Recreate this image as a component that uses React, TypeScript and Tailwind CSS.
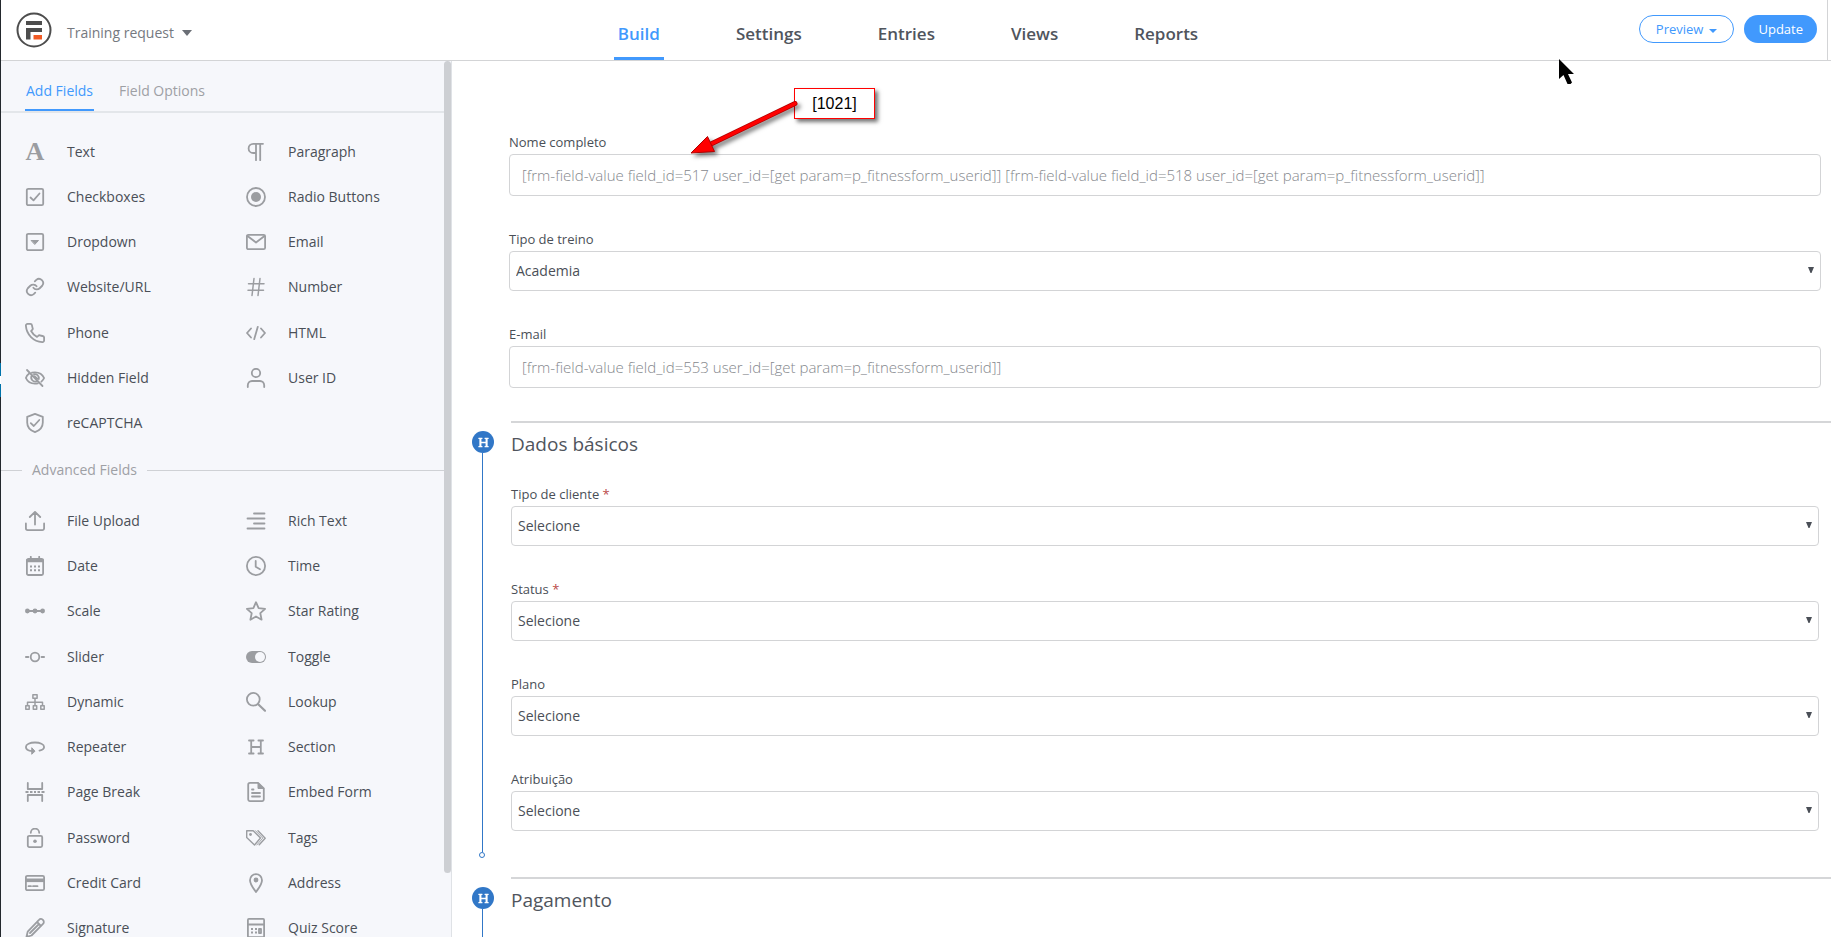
import { useState } from 'react';
import type { ReactNode } from 'react';
import { FaHeading } from 'react-icons/fa';

interface Campo {
  nombre: string;
  icono: ReactNode;
}

const Svg = ({ children }: { children: ReactNode }) => (
  <svg
    viewBox="0 0 20 20"
    fill="none"
    stroke="currentColor"
    strokeWidth={1.8}
    strokeLinecap="round"
    strokeLinejoin="round"
    aria-hidden="true"
    className="w-5 h-5 shrink-0 text-[#9b9da1]">
    {children}
  </svg>
);

const camposBasicos: Campo[] = [
  {
    nombre: 'Text',
    icono: (
      <span
        aria-hidden="true"
        className="w-5 shrink-0 text-center font-['Liberation_Serif',serif] text-[26px] leading-5 font-bold text-[#9b9da1]">
        A
      </span>
    ),
  },
  {
    nombre: 'Paragraph',
    icono: (
      <Svg>
        <path d="M17 1.8H7.2a4.6 4.6 0 0 0 0 9.2H10V1.8M10 11v7.2M14.2 1.8v16.4" />
      </Svg>
    ),
  },
  {
    nombre: 'Checkboxes',
    icono: (
      <Svg>
        <rect x="1.8" y="1.8" width="16.4" height="16.4" rx="1.5" />
        <path d="M5.5 10.5l3 2.8 6-6.8" />
      </Svg>
    ),
  },
  {
    nombre: 'Radio Buttons',
    icono: (
      <Svg>
        <circle cx="10" cy="10" r="9" />
        <circle cx="10" cy="10" r="5" fill="currentColor" stroke="none" />
      </Svg>
    ),
  },
  {
    nombre: 'Dropdown',
    icono: (
      <Svg>
        <rect x="1.8" y="1.8" width="16.4" height="16.4" rx="1.5" />
        <path d="M6.5 8.5h7L10 12.2z" fill="currentColor" strokeWidth={1} />
      </Svg>
    ),
  },
  {
    nombre: 'Email',
    icono: (
      <Svg>
        <rect x="0.9" y="2.8" width="18.2" height="14.4" rx="1.5" />
        <path d="M1.5 4l8.5 6.5L18.5 4" />
      </Svg>
    ),
  },
  {
    nombre: 'Website/URL',
    icono: (
      <Svg>
        <path d="M8.4 10.8a4.2 4.2 0 0 0 6.3.45l2.5-2.5a4.2 4.2 0 0 0-5.9-5.9L9.8 4.3" />
        <path d="M11.6 9.2a4.2 4.2 0 0 0-6.3-.45l-2.5 2.5a4.2 4.2 0 0 0 5.9 5.9l1.5-1.45" />
      </Svg>
    ),
  },
  {
    nombre: 'Number',
    icono: (
      <Svg>
        <path d="M2.5 6.7H18M2 13.3h15.5M8 1.5L6 18.5M14 1.5l-2 17" strokeWidth={1.5} />
      </Svg>
    ),
  },
  {
    nombre: 'Phone',
    icono: (
      <Svg>
        <path d="M19.1 14.8v2.6a1.7 1.7 0 0 1-1.9 1.7 17.5 17.5 0 0 1-16.3-16.2A1.7 1.7 0 0 1 2.6.9h2.7a1.7 1.7 0 0 1 1.7 1.5c.1.9.3 1.7.6 2.5a1.7 1.7 0 0 1-.4 1.9L6.1 8a14 14 0 0 0 5.9 5.9l1.2-1.1a1.7 1.7 0 0 1 1.8-.4c.8.3 1.7.5 2.6.6a1.7 1.7 0 0 1 1.5 1.8z" />
      </Svg>
    ),
  },
  {
    nombre: 'HTML',
    icono: (
      <Svg>
        <path d="M5 5.5L1 10l4 4.5M15 5.5l4 4.5-4 4.5M11.8 3.8L8.2 16.2" />
      </Svg>
    ),
  },
  {
    nombre: 'Hidden Field',
    icono: (
      <Svg>
        <path d="M4.2 5.5C2.5 6.7 1.4 8.3.9 10c1.5 3.4 4.8 5.7 9 5.7 1 0 2-.1 2.9-.4M7 4.7c1-.3 2-.4 3-.4 4.3 0 7.6 2.3 9.1 5.7-.6 1.4-1.5 2.6-2.7 3.6" />
        <path d="M6.7 7.7a4 4 0 0 0 5 5.6M9 6.2a4 4 0 0 1 4.8 4.8M9.5 8.2l2.8 2.5M2 2l15.5 16" />
      </Svg>
    ),
  },
  {
    nombre: 'User ID',
    icono: (
      <Svg>
        <circle cx="10" cy="5" r="4.2" />
        <path d="M1.8 19v-1.8A4.3 4.3 0 0 1 6 13h8a4.3 4.3 0 0 1 4.2 4.2V19" />
      </Svg>
    ),
  },
  {
    nombre: 'reCAPTCHA',
    icono: (
      <Svg>
        <path d="M10 .9l7.8 2.9v5.6c0 4.4-3.1 8-7.8 9.7-4.7-1.7-7.8-5.3-7.8-9.7V3.8z" />
        <path d="M5.8 10.2l3 2.8 5.5-6" />
      </Svg>
    ),
  },
];

const camposAvanzados: Campo[] = [
  {
    nombre: 'File Upload',
    icono: (
      <Svg>
        <path d="M.9 12.5v4.8a1.8 1.8 0 0 0 1.8 1.8h14.6a1.8 1.8 0 0 0 1.8-1.8v-4.8M10 13.5V1.2M4.8 6L10 .9 15.2 6" />
      </Svg>
    ),
  },
  {
    nombre: 'Rich Text',
    icono: (
      <Svg>
        <path d="M8 2.5h10.5M1.5 7.5h17M8 12.5h10.5M1.5 17.5h17" />
      </Svg>
    ),
  },
  {
    nombre: 'Date',
    icono: (
      <Svg>
        <rect x="1.9" y="3" width="16.2" height="16" rx="1.5" />
        <path d="M2 4h16M2 5.3h16M5.8.8v2M14.2.8v2" />
        <path d="M5 10.5h2M9 10.5h2M13 10.5h2M5 14.2h2M9 14.2h2M13 14.2h2" strokeLinecap="butt" strokeWidth={2} />
      </Svg>
    ),
  },
  {
    nombre: 'Time',
    icono: (
      <Svg>
        <circle cx="10" cy="10" r="9.1" />
        <path d="M9.7 5v5.7l4.3 2.5" />
      </Svg>
    ),
  },
  {
    nombre: 'Scale',
    icono: (
      <Svg>
        <path d="M2 10h16" />
        <g fill="currentColor" stroke="none">
          <circle cx="2.4" cy="10" r="2.4" />
          <circle cx="10" cy="10" r="2.4" />
          <circle cx="17.6" cy="10" r="2.4" />
        </g>
      </Svg>
    ),
  },
  {
    nombre: 'Star Rating',
    icono: (
      <Svg>
        <path d="M10 1.2l2.6 5.9 6.5.7-4.8 4.4 1.3 6.5L10 15.5l-5.6 3.2 1.3-6.5L.9 7.8l6.5-.7z" />
      </Svg>
    ),
  },
  {
    nombre: 'Slider',
    icono: (
      <Svg>
        <circle cx="10" cy="10" r="4.3" />
        <path d="M.9 10h2.5M16.6 10h2.5" />
      </Svg>
    ),
  },
  {
    nombre: 'Toggle',
    icono: (
      <Svg>
        <rect x="0" y="4" width="20" height="12" rx="6" fill="currentColor" stroke="none" />
        <circle cx="14" cy="10" r="5" fill="#f6f7fb" stroke="none" />
      </Svg>
    ),
  },
  {
    nombre: 'Dynamic',
    icono: (
      <Svg>
        <path d="M7.9 2.8h4.2v3.4H7.9zM.8 13.8h3.4v3.4H.8zM8.3 13.8h3.4v3.4H8.3zM15.8 13.8h3.4v3.4h-3.4zM10 6.2v7M2.5 13v-2.8h15V13" strokeWidth={1.5} />
      </Svg>
    ),
  },
  {
    nombre: 'Lookup',
    icono: (
      <Svg>
        <circle cx="7.3" cy="7.3" r="6.4" />
        <path d="M12.2 12.2l6.8 6.5" strokeWidth={2.2} />
      </Svg>
    ),
  },
  {
    nombre: 'Repeater',
    icono: (
      <Svg>
        <path d="M14.5 13.6c2.8-.7 4.6-2 4.6-3.7 0-2.6-4-4.4-9.1-4.4S.9 7.3.9 9.9c0 2.2 2.7 3.8 6.6 4.3" />
        <path d="M7 11l3 3.2L7 17z" fill="currentColor" strokeWidth={1} />
      </Svg>
    ),
  },
  {
    nombre: 'Section',
    icono: (
      <Svg>
        <path d="M5.2 3.5v13M14.8 3.5v13M5.2 10h9.6M3 3.5h4.6M12.4 3.5H17M3 16.5h4.6M12.4 16.5H17" />
      </Svg>
    ),
  },
  {
    nombre: 'Page Break',
    icono: (
      <Svg>
        <path d="M2.8.9V7h14.4V.9M2.8 19.1V13h14.4v6.1" />
        <path d="M.5 10h3M5 10h2.5M9 10h2M12.5 10H15M16.5 10h3" strokeLinecap="butt" />
      </Svg>
    ),
  },
  {
    nombre: 'Embed Form',
    icono: (
      <Svg>
        <path d="M12 .9H4A1.8 1.8 0 0 0 2.2 2.7v14.6A1.8 1.8 0 0 0 4 19.1h12a1.8 1.8 0 0 0 1.8-1.8V6.5z" />
        <path d="M12 1v5.5h5.5z" fill="currentColor" strokeWidth={1} />
        <path d="M6 7.5h1.5M6 11h8M6 14.5h8" />
      </Svg>
    ),
  },
  {
    nombre: 'Password',
    icono: (
      <Svg>
        <rect x="2.8" y="7.8" width="14.4" height="11.3" rx="1.5" />
        <path d="M5.8 4.8a4.2 4.2 0 0 1 8.4 0" />
        <circle cx="10" cy="13.3" r="1.8" fill="currentColor" stroke="none" />
      </Svg>
    ),
  },
  {
    nombre: 'Tags',
    icono: (
      <Svg>
        <path d="M.7 2.7h6.5l7.3 7.3-6 7L.7 9.5zM12 2.7l7.2 7.5-6 6.6" strokeWidth={1.4} />
        <path d="M9.5 2.7l7.3 7.4-6 6.9" strokeWidth={0.9} />
        <circle cx="4.5" cy="6.5" r="1.4" fill="currentColor" stroke="none" />
      </Svg>
    ),
  },
  {
    nombre: 'Credit Card',
    icono: (
      <Svg>
        <rect x=".9" y="2.8" width="18.2" height="14.4" rx="1.5" />
        <path d="M1 7.3h18" strokeWidth={3.6} strokeLinecap="butt" />
        <path d="M3.5 13.2H6M8 13.2h4.5" />
      </Svg>
    ),
  },
  {
    nombre: 'Address',
    icono: (
      <Svg>
        <path d="M10 19c-2-3-6-7.5-6-11.8a6 6 0 0 1 12 0C16 11.5 12 16 10 19z" />
        <circle cx="10" cy="7" r="2.4" fill="currentColor" stroke="none" />
      </Svg>
    ),
  },
  {
    nombre: 'Signature',
    icono: (
      <Svg>
        <path d="M14 1.8a2.6 2.6 0 0 1 4 .2 2.6 2.6 0 0 1 0 3.8L6.5 17.5l-5 1.3 1.2-5.2zM12 4l4 4M14 6L5 15" />
      </Svg>
    ),
  },
  {
    nombre: 'Quiz Score',
    icono: (
      <Svg>
        <rect x="1.9" y=".9" width="16.2" height="18.2" rx="1" />
        <path d="M2 6.5h16" />
        <path d="M5 11h2M9 11h2M5 14.5h2M9 14.5h2M13 11h2v4h-2z" strokeLinecap="butt" />
      </Svg>
    ),
  },
];

const ListaCampos = ({ campos, className }: { campos: Campo[]; className: string }) => (
  <ul className={`grid grid-cols-[221px_1fr] ${className}`}>
    {campos.map((campo) => (
      <li key={campo.nombre} className="flex">
        <button type="button" className="flex items-center gap-[22px] w-full pl-6 text-left text-[#4a4f57]">
          {campo.icono}
          {campo.nombre}
        </button>
      </li>
    ))}
  </ul>
);

interface CampoFormProps {
  id: string;
  etiqueta: string;
  valor: string;
  tipo?: 'texto' | 'lista';
  requerido?: boolean;
}

const CampoForm = ({ id, etiqueta, valor, tipo = 'lista', requerido }: CampoFormProps) => (
  <div>
    <label htmlFor={id} className="block h-5 mb-0.5 text-[13px] leading-5 text-[#4a4f57]">
      {etiqueta}
      {requerido && <span className="text-[#b94a48]"> *</span>}
    </label>
    {tipo === 'texto' ? (
      <input
        id={id}
        type="text"
        defaultValue={valor}
        className="block w-full h-[42px] px-3 border border-[#d3d4d6] rounded text-[15px] font-light text-[#85888d] bg-white"
      />
    ) : (
      <div className="relative">
        <select
          id={id}
          defaultValue={valor}
          className="block appearance-none w-full h-10 px-1.5 border border-[#d3d4d6] rounded text-sm text-[#4a4f57] bg-white">
          <option value={valor}>{valor}</option>
        </select>
        <svg viewBox="0 0 6 6" className="absolute right-[7px] top-4 w-1.5 h-1.5 pointer-events-none" aria-hidden="true">
          <path d="M0 0h6L3.5 6h-1z" fill="#4a4f57" />
        </svg>
      </div>
    )}
  </div>
);

const Seccion = ({ titulo, children }: { titulo: string; children?: ReactNode }) => (
  <section className="flex">
    <div className="w-[22px] mr-[17px] pt-2.5 flex flex-col items-start shrink-0">
      <span className="flex items-center justify-center w-[22px] h-[22px] rounded-full bg-[#3177c7] text-white shrink-0">
        <FaHeading className="w-[11px] h-[11px]" />
      </span>
      <span className="w-px flex-1 ml-2.5 bg-[#3177c7]" />
      <span className="w-1.5 h-1.5 ml-[7px] rounded-full border border-[#3177c7] mb-[19px] shrink-0" />
    </div>
    <div className="flex-1 min-w-0 border-t-2 border-[#d5d6d8]">
      <h2 className="h-[61px] pt-[7px] text-[19px] leading-7 text-[#50555d]">{titulo}</h2>
      <div className="flex flex-col gap-[33px] pr-3 pb-[46px]">{children}</div>
    </div>
  </section>
);

const pestanas = ['Build', 'Settings', 'Entries', 'Views', 'Reports'];

export default function App() {
  const [pestana, setPestana] = useState('Build');
  const [panel, setPanel] = useState('Add Fields');

  return (
    <div className="relative flex h-screen overflow-hidden bg-white font-['Open_Sans','Noto_Sans',sans-serif] text-sm">
      <div className="w-px shrink-0 flex flex-col bg-[#23282d]">
        <div className="mt-[363px] h-[34px] py-[13px] bg-[#0073aa]">
          <div className="h-2 bg-white" />
        </div>
      </div>

      <div className="flex-1 min-w-0 flex flex-col">
        <header className="h-[61px] shrink-0 border-b border-[#d3d4d6] pr-[3px]">
          <div className="h-full grid grid-cols-[1fr_auto_1fr] border-r border-[#d3d4d6]">
            <div className="flex items-center pl-[15px]">
              <svg viewBox="0 0 36 36" className="w-9 h-9 mr-[15px]" aria-hidden="true">
                <circle cx="18" cy="18" r="16.5" fill="none" stroke="#4d4d4d" strokeWidth="2" />
                <path d="M10 9h16v4H10zM10 16h16v4H14.5v7.5H10z" fill="#4d4d4d" />
                <path d="M17.5 23H26v4.5h-8.5z" fill="#f15a24" />
              </svg>
              <button type="button" className="flex items-center gap-2 pt-1.5 text-[#75797f]">
                Training request
                <svg viewBox="0 0 10 6" className="w-2.5 h-1.5" aria-hidden="true">
                  <path d="M0 0h10L5 6z" fill="#6b6f76" />
                </svg>
              </button>
            </div>
            <nav className="flex gap-[68px] mr-3">
              {pestanas.map((p) => (
                <button
                  key={p}
                  type="button"
                  onClick={() => setPestana(p)}
                  className={`px-1 pt-3 border-b-3 text-[17px] font-semibold ${
                    pestana === p
                      ? 'text-[#4199fd] border-[#4199fd]'
                      : 'text-[#50555d] border-transparent'
                  }`}>
                  {p}
                </button>
              ))}
            </nav>
            <div className="flex justify-end gap-2.5 pt-[15px] pr-2.5 text-[13px]">
              <button
                type="button"
                className="flex items-center gap-1.5 h-7 px-4 border border-[#4199fd] rounded-full text-[#4199fd]">
                Preview
                <svg viewBox="0 0 8 4" className="w-2 h-1 mt-1" aria-hidden="true">
                  <path d="M0 0h8L4 4z" fill="#4199fd" />
                </svg>
              </button>
              <button type="button" className="h-7 px-3.5 rounded-full bg-[#4199fd] text-white">
                Update
              </button>
            </div>
          </div>
        </header>

        <div className="flex-1 min-h-0 flex">
          <aside className="flex w-[451px] shrink-0 border-r border-[#dfe2e6] bg-[#f6f7fb]">
            <div className="flex-1 overflow-hidden">
              <div className="flex h-[52px] pl-6 gap-6 border-b-2 border-[#e3e6ea]">
                {['Add Fields', 'Field Options'].map((p) => (
                  <button
                    key={p}
                    type="button"
                    onClick={() => setPanel(p)}
                    className={`px-px pt-3 border-b-2 ${
                      panel === p
                        ? 'text-[#4199fd] border-[#4199fd]'
                        : 'text-[#9ea0a5] border-transparent'
                    }`}>
                    {p}
                  </button>
                ))}
              </div>
              <ListaCampos campos={camposBasicos} className="mt-4 h-[317px]" />
              <h3 className="flex items-center gap-2.5 h-12 mb-1 text-[#9ea0a5]">
                <span className="w-[21px] h-px bg-[#cfd1d5]" />
                Advanced Fields
                <span className="flex-1 h-px bg-[#cfd1d5]" />
              </h3>
              <ListaCampos campos={camposAvanzados} className="h-[453px]" />
            </div>
            <div className="w-[7px] h-[92.7%] rounded-full bg-[#cdcfd3]" />
          </aside>

          <main className="relative flex-1 min-w-0 overflow-hidden">
            <div className="flex flex-col gap-[33px] pt-[71px] pl-[57px] pr-2.5 pb-[33px]">
              <CampoForm
                id="nome"
                etiqueta="Nome completo"
                tipo="texto"
                valor="[frm-field-value field_id=517 user_id=[get param=p_fitnessform_userid]] [frm-field-value field_id=518 user_id=[get param=p_fitnessform_userid]]"
              />
              <CampoForm id="treino" etiqueta="Tipo de treino" valor="Academia" />
              <CampoForm
                id="email"
                etiqueta="E-mail"
                tipo="texto"
                valor="[frm-field-value field_id=553 user_id=[get param=p_fitnessform_userid]]"
              />
            </div>

            <div className="pl-5">
              <Seccion titulo="Dados básicos">
                <CampoForm id="cliente" etiqueta="Tipo de cliente" valor="Selecione" requerido />
                <CampoForm id="status" etiqueta="Status" valor="Selecione" requerido />
                <CampoForm id="plano" etiqueta="Plano" valor="Selecione" />
                <CampoForm id="atribuicao" etiqueta="Atribuição" valor="Selecione" />
              </Seccion>
              <Seccion titulo="Pagamento" />
            </div>

            {/* nota con flecha hacia el primer campo */}
            <div className="absolute left-[342px] top-[27px] flex items-center justify-center w-[81px] h-[31px] border border-[#f00] bg-white shadow-[3px_3px_4px_rgba(0,0,0,0.55)] font-['Liberation_Sans',Arial,sans-serif] text-base text-black">
              [1021]
            </div>
            <svg
              viewBox="0 0 120 70"
              className="absolute left-[235px] top-[35px] w-[120px] h-[70px] drop-shadow-[3px_3px_2px_rgba(0,0,0,0.5)]"
              aria-hidden="true">
              <path d="M108 7.5L24 48" stroke="#b00000" strokeWidth="5" strokeLinecap="round" />
              <path d="M108 7.5L24 48" stroke="#f00" strokeWidth="3.5" strokeLinecap="round" />
              <path d="M4 57L20.5 40.5l7 15z" fill="#f00" stroke="#b00000" strokeWidth="1" />
            </svg>
          </main>
        </div>
      </div>

      <svg viewBox="0 0 15 25" className="absolute right-[257px] top-[59px] w-[15px] h-[25px]" aria-hidden="true">
        <path d="M0 0v20l4.5-4 4 9h3l1.5-1.5L9 15h6z" fill="#000" />
      </svg>
    </div>
  );
}
